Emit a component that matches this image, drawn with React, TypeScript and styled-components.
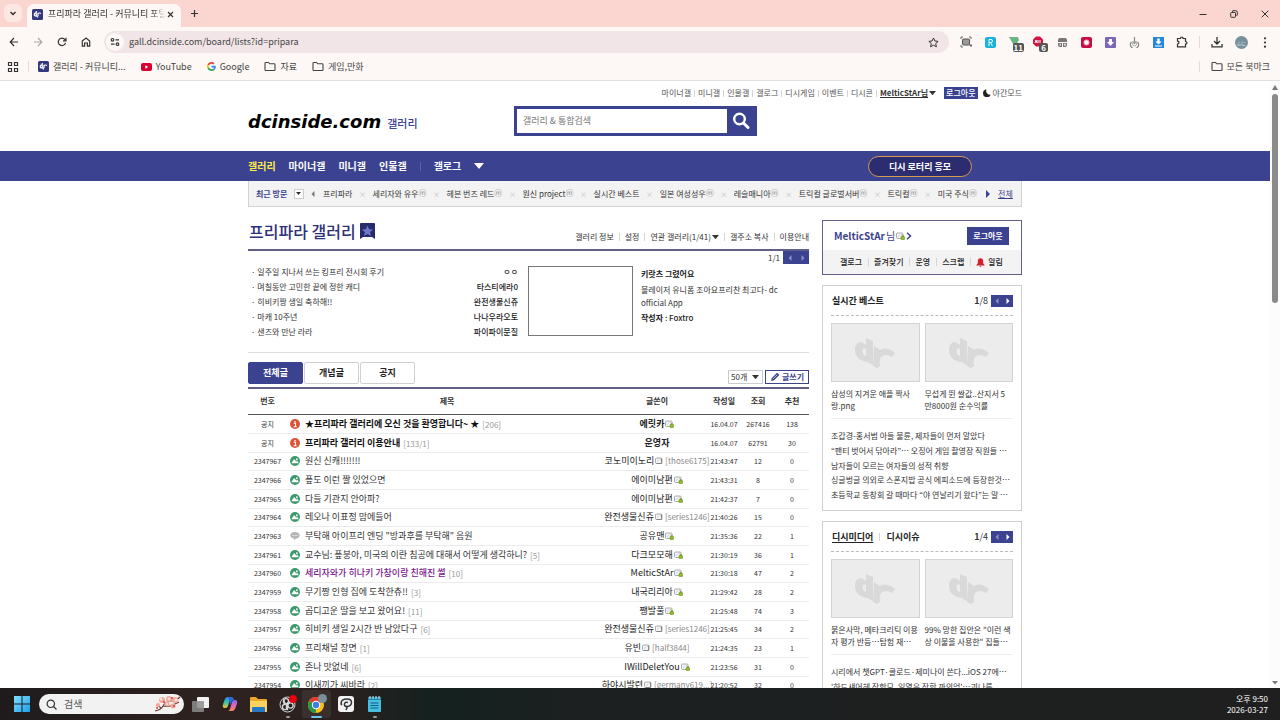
import React from "react";
import styled, { createGlobalStyle } from "styled-components";

const navy = "#3b4390";
const rule = "#615e88";
const sans = `"Noto Sans CJK KR", "Noto Sans", sans-serif`;

const Global = createGlobalStyle`
  *, *::before, *::after { box-sizing: border-box; }
  html, body, #root { height: 100%; }
  body { margin: 0; overflow: hidden; font-family: ${sans}; font-size: 8px; line-height: 12px; color: #333; background: #fff; }
  a { color: inherit; text-decoration: none; }
  ul, h1, h2, h3, p { margin: 0; padding: 0; list-style: none; font-size: inherit; font-weight: inherit; }
  button, input, select { font: inherit; color: inherit; margin: 0; padding: 0; border: 0; background: none; border-radius: 0; }
  button { cursor: pointer; }
  svg { display: block; flex: none; }
`;

/* ---------- browser window ---------- */

const Screen = styled.div`
  display: flex;
  flex-direction: column;
  height: 100vh;
`;

const TabStrip = styled.header`
  display: flex;
  align-items: flex-end;
  height: 27px;
  flex: none;
  padding-left: 4px;
  background: #fbd6d0;
`;

const TabSearch = styled.button`
  display: grid;
  place-items: center;
  width: 18px;
  height: 18px;
  margin: 0 5px 5px 0;
  border-radius: 6px;
  background: #fde7e3;
`;

const Tab = styled.div`
  display: flex;
  align-items: center;
  width: 154px;
  height: 23px;
  padding: 0 6px 3px 5px;
  border-radius: 7px 7px 0 0;
  background: #fdf8f6;
  font-size: 9px;
  color: #333;
`;

const TabTitle = styled.span`
  flex: 1;
  margin-left: 5px;
  overflow: hidden;
  white-space: nowrap;
  mask-image: linear-gradient(90deg, #000 88%, transparent);
`;

const NewTab = styled.button`
  display: grid;
  place-items: center;
  width: 26px;
  height: 27px;
`;

const WindowButtons = styled.div`
  display: flex;
  margin-left: auto;
`;

const WindowButton = styled.button`
  display: grid;
  place-items: center;
  width: 31px;
  height: 27px;
`;

const Toolbar = styled.div`
  display: flex;
  align-items: center;
  height: 30px;
  flex: none;
  padding: 0 3px 0 2px;
  background: #fdf8f6;
`;

const ToolButton = styled.button`
  position: relative;
  display: grid;
  place-items: center;
  width: 24px;
  height: 24px;
`;

const Address = styled.div`
  display: flex;
  align-items: center;
  flex: 1;
  height: 22px;
  margin: 0 5px 0 6px;
  padding: 0 10px 0 2px;
  border-radius: 11px;
  background: #f1e5e8;
`;

const SiteInfo = styled.button`
  display: grid;
  place-items: center;
  width: 18px;
  height: 18px;
  border-radius: 50%;
  background: #fdf8f6;
`;

const UrlInput = styled.input`
  flex: 1;
  margin-left: 5px;
  font-size: 9px;
  color: #444;
  outline: 0;
`;

const VLine = styled.span<{ $h?: number; $m?: number; $c?: string }>`
  flex: none;
  width: 1px;
  height: ${(p) => p.$h ?? 8}px;
  margin: 0 ${(p) => p.$m ?? 0}px;
  background: ${(p) => p.$c ?? "#d5d5d5"};
`;

const CountBadge = styled.span`
  position: absolute;
  right: 2px;
  bottom: 2px;
  min-width: 9px;
  padding: 0 1px;
  border-radius: 2px;
  background: #555;
  color: #fff;
  font-size: 8px;
  font-weight: 700;
  line-height: 9px;
  text-align: center;
`;

const Avatar = styled.span`
  display: grid;
  place-items: center;
  width: 13px;
  height: 13px;
  border-radius: 50%;
  background: #78909c;
  color: #dfe7ea;
  font-size: 5px;
  line-height: 13px;
`;

const Bookmarks = styled.nav`
  display: flex;
  align-items: center;
  height: 24px;
  flex: none;
  padding: 0 10px 4px 7px;
  border-bottom: 1px solid #e4dfde;
  background: #fdf8f6;
  font-size: 9px;
  color: #444;
`;

const Bookmark = styled.a`
  display: flex;
  align-items: center;
  gap: 4px;
  margin-right: 15px;
  white-space: nowrap;
`;

const AllBookmarks = styled(Bookmark)`
  margin: 0 0 0 11px;
`;

const Push = styled.span`
  flex: 1;
`;

/* ---------- page frame ---------- */

const Viewport = styled.div`
  display: flex;
  flex: 1;
  min-height: 0;
`;

const Page = styled.div`
  flex: 1;
  min-width: 0;
  overflow: hidden;
`;

const Wrap = styled.div`
  width: 100%;
  max-width: 774px;
  margin: 0 auto;
`;

const ScrollTrack = styled.div`
  display: flex;
  flex-direction: column;
  align-items: center;
  width: 10px;
  padding: 4px 0 3px;
  background: #fcfcfc;
`;

const ScrollThumb = styled.div`
  width: 6px;
  height: 32%;
  flex: 0 1 auto;
  margin: 4px 0 auto;
  border-radius: 3px;
  background: #8a8a8a;
  min-height: 20px;
  flex-basis: 209px;
`;

/* ---------- site header ---------- */

const TopLinks = styled.div`
  display: flex;
  align-items: center;
  justify-content: flex-end;
  gap: 3px;
  height: 24px;
  color: #555;
`;

const UserLink = styled.a`
  display: flex;
  align-items: center;
  gap: 1px;
  font-weight: 700;
  color: #333;
  u { text-underline-offset: 1px; }
`;

const LogoutSmall = styled.button`
  height: 12px;
  margin: 0 2px 0 5px;
  padding: 0 2px;
  background: ${navy};
  color: #fff;
  font-weight: 500;
  line-height: 12px;
`;

const Moon = styled.button`
  display: flex;
  align-items: center;
  gap: 2px;
`;

const Brand = styled.div`
  display: grid;
  grid-template-columns: 266px 243px;
  height: 46px;
`;

const BrandName = styled.h1`
  display: flex;
  align-items: baseline;
  gap: 6px;
  padding-top: 6px;
  line-height: 22px;
`;

const Wordmark = styled.a`
  font-family: "DejaVu Sans", sans-serif;
  font-size: 18px;
  font-style: italic;
  font-weight: 700;
  color: #000;
`;

const BrandSub = styled.a`
  font-size: 11px;
  font-weight: 500;
  color: ${navy};
`;

const Search = styled.form`
  display: flex;
  height: 30px;
  margin-top: 1px;
  border: 3px solid ${navy};
  background: #fff;
`;

const SearchInput = styled.input`
  flex: 1;
  min-width: 0;
  padding-left: 6px;
  font-size: 9px;
  outline: 0;
  &::placeholder { color: #777; opacity: 1; }
`;

const SearchButton = styled.button`
  display: grid;
  place-items: center;
  width: 27px;
  background: ${navy};
`;

const MainNav = styled.nav`
  background: ${navy};
  color: #fff;
`;

const NavRow = styled(Wrap)`
  display: flex;
  align-items: center;
  height: 30px;
  font-size: 10px;
  font-weight: 700;
`;

const NavLink = styled.a<{ $on?: boolean }>`
  margin-right: 13px;
  color: ${(p) => (p.$on ? "#ffed44" : "#fff")};
`;

const Promo = styled.a`
  width: 104px;
  height: 21px;
  margin: 0 50px 0 auto;
  border: 1px solid #d79a55;
  border-radius: 11px;
  background: #2b2d70;
  font-size: 9px;
  line-height: 19px;
  text-align: center;
`;

const Recent = styled(Wrap)`
  display: flex;
  align-items: center;
  justify-content: space-between;
  height: 26px;
  padding: 0 8px 0 7px;
  border: 1px solid #d3d3d3;
  border-top: 0;
  background: #f3f3f3;
  white-space: nowrap;
`;

const RecentTitle = styled.strong`
  color: ${navy};
`;

const TinyBox = styled.button`
  display: grid;
  place-items: center;
  width: 10px;
  height: 10px;
  border: 1px solid #ccc;
  background: #fff;
`;

const Visit = styled.a`
  display: flex;
  align-items: flex-start;
`;

const Minor = styled.span`
  font-size: 8px;
  line-height: 9px;
  color: #888;
`;

const Remove = styled.button`
  color: #bbb;
  font-size: 7px;
`;

const AllLink = styled.a`
  color: ${navy};
  text-decoration: underline;
  text-underline-offset: 1px;
`;

/* ---------- gallery column ---------- */

const Columns = styled(Wrap)`
  display: grid;
  grid-template-columns: minmax(0, 1fr) 200px;
  gap: 13px;
  align-items: start;
`;

const GalleryHead = styled.div`
  display: flex;
  align-items: flex-end;
  height: 44px;
  padding: 0 0 6px 1px;
  border-bottom: 2px solid ${rule};
`;

const GalleryTitle = styled.h2`
  display: flex;
  align-items: center;
  gap: 4px;
  font-size: 16px;
  font-weight: 500;
  line-height: 24px;
  color: #2d3178;
`;

const GalleryLinks = styled.div`
  display: flex;
  align-items: center;
  gap: 5px;
  margin-left: auto;
  color: #333;
`;

const WithArrow = styled.a`
  display: flex;
  align-items: center;
  gap: 1px;
`;

const Feature = styled.section`
  display: grid;
  grid-template-columns: 270px 105px minmax(0, 1fr);
  column-gap: 10px;
  height: 102px;
  border-bottom: 1px solid #ddd;
`;

const FeatureList = styled.ul`
  display: flex;
  flex-direction: column;
  justify-content: space-between;
  height: 72px;
  margin-top: 15px;
  padding-left: 3px;
`;

const FeatureItem = styled.li`
  display: flex;
  justify-content: space-between;
`;

const FeatureWriter = styled.span`
  font-weight: 500;
  color: #222;
`;

const FeatureImage = styled.a`
  height: 70px;
  margin-top: 15px;
  border: 1px solid #777;
  background: #fff;
`;

const FeatureText = styled.div`
  display: flex;
  flex-direction: column;
  margin-left: -2px;
`;

const Pager = styled.div`
  display: flex;
  align-items: center;
  justify-content: flex-end;
  gap: 3px;
  color: #333;
`;

const PagerButtons = styled.span<{ $tall?: boolean }>`
  display: flex;
  height: ${(p) => (p.$tall ? 13 : 12)}px;
  background: ${navy};
  button {
    display: grid;
    place-items: center;
    width: ${(p) => (p.$tall ? 13 : 11)}px;
  }
`;

const FeatureTitle = styled.strong`
  margin-top: 4px;
  line-height: 12px;
  color: #222;
`;

const FeatureDesc = styled.p`
  margin: 3px 0;
  line-height: 13px;
`;

const ListBar = styled.div`
  display: flex;
  align-items: flex-end;
  gap: 1px;
  height: 36px;
  padding-bottom: 3px;
  border-bottom: 2px solid ${rule};
`;

const ListTab = styled.button<{ $on?: boolean }>`
  width: 55px;
  height: 22px;
  border: 1px solid ${(p) => (p.$on ? navy : "#d0d0d0")};
  border-radius: 2px;
  background: ${(p) => (p.$on ? navy : "#fff")};
  color: ${(p) => (p.$on ? "#fff" : "#222")};
  font-size: 9px;
  font-weight: 700;
`;

const SelectBox = styled.label`
  display: flex;
  align-items: center;
  width: 35px;
  height: 14px;
  margin: 0 1px 0 auto;
  padding: 0 3px 0 2px;
  border: 1px solid #ccc;
  select { flex: 1; min-width: 0; appearance: none; outline: 0; line-height: 12px; }
`;

const WriteButton = styled.button`
  display: flex;
  align-items: center;
  justify-content: center;
  gap: 2px;
  width: 44px;
  height: 14px;
  border: 1px solid ${navy};
  color: ${navy};
  font-weight: 700;
`;

const Posts = styled.table`
  width: 100%;
  border-collapse: collapse;
  table-layout: fixed;
  th { height: 25px; padding: 0; border-bottom: 1px solid #555; font-weight: 700; }
  td { height: 19px; padding: 0; border-bottom: 1px solid #ececec; font-size: 7px; text-align: center; white-space: nowrap; }
  tbody tr:nth-child(3n) td { height: 18px; }
`;

const Col = styled.col<{ $w?: number }>`
  width: ${(p) => (p.$w ? `${p.$w}px` : "auto")};
`;

const Subject = styled.div`
  display: flex;
  align-items: center;
  gap: 5px;
  padding-left: 3px;
  font-size: 9px;
`;

const SubjectLink = styled.a<{ $kind?: string }>`
  font-weight: ${(p) => (p.$kind === "notice" ? 700 : p.$kind === "seen" ? 500 : 400)};
  color: ${(p) => (p.$kind === "seen" ? "#7a1589" : p.$kind === "notice" ? "#111" : "#333")};
`;

const Replies = styled.a`
  margin: 2px 0 0 -2px;
  font-size: 8px;
  color: #999;
`;

const Writer = styled.span<{ $bold?: boolean }>`
  display: flex;
  align-items: center;
  justify-content: center;
  gap: 1px;
  font-size: 9px;
  font-weight: ${(p) => (p.$bold ? 700 : 400)};
  color: #222;
  small { font-size: 8px; color: #888; }
`;

/* ---------- side column ---------- */

const Side = styled.aside`
  display: flex;
  flex-direction: column;
  gap: 10px;
  padding-top: 13px;
`;

const UserBox = styled.section`
  border: 1px solid ${rule};
`;

const UserTop = styled.div`
  display: flex;
  align-items: center;
  height: 29px;
  padding: 0 12px 0 11px;
  font-size: 10px;
  color: ${navy};
  a { display: flex; align-items: center; gap: 1px; }
`;

const Logout = styled.button`
  width: 42px;
  height: 18px;
  margin-left: auto;
  background: ${navy};
  color: #fff;
  font-size: 8px;
  font-weight: 700;
`;

const UserMenu = styled.div`
  display: flex;
  align-items: center;
  justify-content: space-between;
  height: 24px;
  padding: 0 18px 0 17px;
  background: #f3f3f3;
  font-weight: 500;
  color: #222;
  a { display: flex; align-items: center; gap: 3px; }
`;

const Card = styled.section`
  padding: 0 8px 8px;
  border: 1px solid #d0d0d0;
`;

const CardHead = styled.div`
  display: flex;
  align-items: center;
  height: 30px;
  padding-left: 1px;
  border-bottom: 1px dashed #bbb;
  font-size: 9px;
  font-weight: 700;
  color: #222;
`;

const CardTab = styled.button<{ $on?: boolean }>`
  font-weight: 700;
  text-decoration: ${(p) => (p.$on ? "underline" : "none")};
  text-underline-offset: 2px;
`;

const CardPager = styled(Pager)`
  margin-left: auto;
  font-weight: 400;
`;

const Thumbs = styled.div`
  display: grid;
  grid-template-columns: 1fr 1fr;
  gap: 5px;
  padding: 7px 0 6px;
  border-bottom: 1px solid #eee;
`;

const Thumb = styled.a`
  display: flex;
  flex-direction: column;
  gap: 6px;
  white-space: nowrap;
`;

const ThumbBox = styled.span`
  display: grid;
  place-items: center;
  height: 59px;
  border: 1px solid #d3d3d3;
  background: #ececec;
`;

const Headlines = styled.ul`
  display: flex;
  flex-direction: column;
  justify-content: space-between;
  height: 73px;
  margin-top: 10px;
  li { overflow: hidden; white-space: nowrap; text-overflow: ellipsis; line-height: 14px; }
`;

/* ---------- taskbar ---------- */

const Taskbar = styled.footer`
  display: flex;
  align-items: center;
  height: 32px;
  flex: none;
  padding: 0 12px 0 10px;
  background: linear-gradient(90deg, #1f1b1d 0, #2e2220 16%, #2b211f 26%, #14211f 34%, #1c2020 45%, #1f1f1f 100%);
`;

const TaskSearch = styled.label`
  display: flex;
  align-items: center;
  gap: 7px;
  width: 145px;
  height: 20px;
  margin: 0 2px 0 5px;
  padding: 0 3px 0 7px;
  border-radius: 10px;
  background: #f3f2f2;
  input { flex: 1; min-width: 0; font-size: 10px; outline: 0; }
  input::placeholder { color: #555; opacity: 1; }
`;

const TaskButton = styled.button<{ $wide?: boolean; $open?: boolean; $active?: boolean }>`
  position: relative;
  display: grid;
  place-items: center;
  width: ${(p) => (p.$wide ? 24 : 29)}px;
  height: 28px;
  border-radius: 3px;
  background: ${(p) => (p.$active ? "rgba(255,255,255,0.07)" : "none")};
  &::after {
    content: "";
    position: absolute;
    bottom: 0;
    width: ${(p) => (p.$active ? 11 : 4)}px;
    height: 2px;
    border-radius: 1px;
    background: ${(p) => (p.$active ? "#6cc4ef" : p.$open ? "#9a9a9a" : "transparent")};
  }
`;

const Clock = styled.div`
  margin-left: auto;
  color: #fff;
  line-height: 11px;
  text-align: right;
`;

/* ---------- drawings ---------- */

const Down = ({ w = 6, c = "#333" }: { w?: number; c?: string }) => (
  <svg width={w} height={w * 0.6} viewBox="0 0 10 6"><path d="M0 0h10L5 6z" fill={c} /></svg>
);
const Side3 = ({ dir, c, s = 6 }: { dir: "l" | "r"; c: string; s?: number }) => (
  <svg width={s} height={s} viewBox="0 0 6 6"><path d={dir === "l" ? "M4.5 0v6L1.5 3z" : "M1.5 0v6l3-3z"} fill={c} /></svg>
);

const DcMark = () => (
  <svg width="11" height="11" viewBox="0 0 22 22">
    <rect width="22" height="22" rx="3" fill="#33387f" />
    <path d="M8.5 4v9.5q-4 1-4-2.500T8.500 8.500M8.500 13.500l3.500 3M12 14V7.500M12 10q2-3.500 6-1" fill="none" stroke="#fff" strokeWidth="2.400" />
  </svg>
);

const Placeholder = () => (
  <svg width="42" height="32" viewBox="0 0 42 32" fill="#d9d9d9">
    <path fillRule="evenodd" d="M12 1l7 3v24L13.500 25Q1 23 1 13 1 5 7.500 5L12 8zM12 12Q8.500 10 8.500 14t3.500 5z" />
    <path d="M20 9l6 4q6-4 15 3l-3 4q-7-4-11 0-2 3-1 9l-3 2-4-2z" />
  </svg>
);

const Folder = () => (
  <svg width="12" height="11" viewBox="0 0 12 11"><path d="M1 2.200q0-.7.700-.7h2.800l1.200 1.300h4.600q.7 0 .7.700v5.300q0 .7-.7.700H1.700q-.7 0-.7-.7z" fill="none" stroke="#444" strokeWidth="1.100" /></svg>
);

const NickIcon = ({ locked = true }: { locked?: boolean }) => (
  <svg width="9" height="8" viewBox="0 0 18 16">
    <rect x="1" y="2" width="13" height="11" rx="2" fill="#f4f4f4" stroke="#999" strokeWidth="1.600" />
    <path d="M4 10l4-5M10 4l2 2" stroke="#aaa" />
    {locked ? <g><rect x="10" y="9" width="7" height="6" rx="1" fill="#8fc31f" stroke="#5a7d12" /><path d="M12 9V7h3v2" fill="none" stroke="#5a7d12" /></g> : <path d="M13 3v10H3" fill="none" stroke="#777" strokeWidth="1.600" />}
  </svg>
);

const RowIcon = ({ kind }: { kind?: string }) => {
  if (kind === "notice")
    return (
      <svg width="10" height="10" viewBox="0 0 20 20"><circle cx="10" cy="10" r="10" fill="#dd5536" /><circle cx="10" cy="5.500" r="1.700" fill="#fff" /><path d="M7.500 8.500H11v6.500M7.500 15.200h5.500" stroke="#fff" strokeWidth="2.200" fill="none" /></svg>
    );
  if (kind === "talk")
    return (
      <svg width="10" height="10" viewBox="0 0 20 20"><path d="M10 2c5.500 0 9.500 2.800 9.500 6.700S16 15 11.500 15.400L8 18.500V15.200C3.500 14.700.5 12 .5 8.700.5 4.800 4.500 2 10 2z" fill="#b5b5b5" /><path d="M5 9h2m2 0h2m2 0h2" stroke="#fff" strokeWidth="1.800" /></svg>
    );
  return (
    <svg width="10" height="10" viewBox="0 0 20 20"><circle cx="10" cy="10" r="10" fill="#3a9a6c" /><path d="M3.500 14.500V13l4.700-7 4.500 5 1.800-1.500 2.500 3v2z" fill="#fff" /><circle cx="13.800" cy="6.500" r="1.800" fill="#fff" /></svg>
  );
};

const line = { fill: "none", stroke: "#333", strokeWidth: 1.2 } as const;

/* ---------- data ---------- */

type Post = [no: string, kind: string, title: string, replies: string, writer: string, id: string, date: string, views: string, likes: string];

const posts: Post[] = [
  ["공지", "notice", "★프리파라 갤러리에 오신 것을 환영합니다~ ★", "206", "에릿카", "lock", "16.04.07", "267416", "138"],
  ["공지", "notice", "프리파라 갤러리 이용안내", "133/1", "운영자", "", "16.04.07", "62791", "30"],
  ["2347967", "", "원신 신캐!!!!!!!", "", "코노미이노리", "those6175", "21:43:47", "12", "0"],
  ["2347966", "", "픞도 이런 짤 있었으면", "", "에이미남편", "lock", "21:43:31", "8", "0"],
  ["2347965", "", "다들 기관지 안아파?", "", "에이미남편", "lock", "21:42:37", "7", "0"],
  ["2347964", "", "레오나 이표정 맘에들어", "", "완전생물신쥬", "series1246", "21:40:26", "15", "0"],
  ["2347963", "talk", "부탁해 아이프리 엔딩 \"방과후를 부탁해\" 음원", "", "공유맨", "lock", "21:35:36", "22", "1"],
  ["2347961", "", "교수님: 픞붕아, 미국의 이란 침공에 대해서 어떻게 생각하니?", "5", "다크모모해", "lock", "21:30:19", "36", "1"],
  ["2347960", "seen", "세리자와가 히나키 가창이랑 친해진 썰", "10", "MelticStAr", "lock", "21:30:18", "47", "2"],
  ["2347959", "", "무기짱 인형 집에 도착한츄!!", "3", "내국리리아", "lock", "21:29:42", "28", "2"],
  ["2347958", "", "곱디고운 딸을 보고 왔어요!", "11", "쨍발풀", "lock", "21:25:48", "74", "3"],
  ["2347957", "", "히비키 생일 2시간 반 남았다구", "6", "완전생물신쥬", "series1246", "21:25:45", "34", "2"],
  ["2347956", "", "프리채널 장면", "1", "유빈", "half3844", "21:24:35", "23", "1"],
  ["2347955", "", "존나 맛없네", "6", "IWillDeletYou", "lock", "21:23:56", "31", "0"],
  ["2347954", "", "이새끼가 씨바라", "2", "하야시발련", "germany619...", "21:20:52", "32", "0"],
];

const features = [
  ["일주일 지나서 쓰는 킹프리 전시회 후기", "ㅇㅇ"],
  ["며칠동안 고민한 끝에 정한 캐디", "타스티에라0"],
  ["히비키짱 생일 축하해!!", "완전생물신쥬"],
  ["마캐 10주년", "나나우라오토"],
  ["샌즈와 만난 라라", "파이파이문질"],
];

const visits: [string, boolean][] = [
  ["프리파라", false], ["세리자와 유우", true], ["헤븐 번즈 레드", true], ["원신 project", true], ["실시간 베스트", false],
  ["일본 여성성우", true], ["레슬매니아", true], ["트릭컬 글로벌서버", true], ["트릭컬", true], ["미국 주식", true],
];

const bestThumbs = [["삼성의 지겨운 애플 짝사", "랑.png"], ["무섭게 뛴 쌀값..산지서 5", "만8000원 순수익률"]];
const mediaThumbs = [["붉은사막, 메타크리틱 이용", "자 평가 반등…탐험 재…"], ["99% 망한 집안은 \"이런 색", "상 이불을 사용한\" 집들…"]];

const bestLines = [
  "조갑경-홍서범 아들 불륜, 제자들이 먼저 알았다",
  "“팬티 벗어서 닦아라”… 오징어 게임 촬영장 직원들 …",
  "남자들이 모르는 여자들의 성적 취향",
  "싱글벙글 의외로 스폰지밥 공식 에피소드에 등장한것…",
  "초등학교 동창회 갈 때마다 “야 연날리기 왔다”는 말 …",
];
const mediaLines = [
  "시리에서 챗GPT·클로드·제미나이 쓴다...iOS 27에서…",
  "'하드섀어헤 장항모, 일열우 장학 까의엄'…괴나름",
  "프로야구 개막전 전 구장 매진 행진",
  "신작 애니메이션 4월 방영 일정 공개",
  "봄나들이 가기 좋은 전국 벚꽃 명소",
];

const ThumbPair = ({ items }: { items: string[][] }) => (
  <Thumbs>
    {items.map((t) => (
      <Thumb href="#" key={t[0]}>
        <ThumbBox><Placeholder /></ThumbBox>
        <span>{t[0]}<br />{t[1]}</span>
      </Thumb>
    ))}
  </Thumbs>
);

const SidePager = ({ total }: { total: number }) => (
  <CardPager>
    <span><b>1</b>/{total}</span>
    <PagerButtons>
      <button aria-label="이전"><Side3 dir="l" c="#8b90c8" /></button>
      <button aria-label="다음"><Side3 dir="r" c="#fff" /></button>
    </PagerButtons>
  </CardPager>
);

/* ---------- sections ---------- */

const BrowserTop = () => (
  <>
    <TabStrip>
      <TabSearch aria-label="탭 검색"><svg width="8" height="8" viewBox="0 0 8 8"><path d="M1.500 3L4 5.500 6.500 3" {...line} strokeWidth={1.5} /></svg></TabSearch>
      <Tab>
        <DcMark />
        <TabTitle>프리파라 갤러리 - 커뮤니티 포털</TabTitle>
        <button aria-label="탭 닫기"><svg width="9" height="9" viewBox="0 0 9 9"><path d="M2 2l5 5M7 2L2 7" {...line} /></svg></button>
      </Tab>
      <NewTab aria-label="새 탭"><svg width="9" height="9" viewBox="0 0 9 9"><path d="M4.500 1v7M1 4.500h7" {...line} /></svg></NewTab>
      <WindowButtons>
        <WindowButton aria-label="최소화"><svg width="8" height="8" viewBox="0 0 8 8"><path d="M.5 4.500h7" {...line} strokeWidth={1} /></svg></WindowButton>
        <WindowButton aria-label="창 복원"><svg width="8" height="8" viewBox="0 0 8 8"><path d="M2.500 2V1.200Q2.500.7 3 .7h2.800Q7.300.7 7.300 2.200V5q0 .5-.8.500M1.400 2.500h3.400q.7 0 .7.700v3.400q0 .7-.7.700H1.400q-.7 0-.7-.7V3.200q0-.7.7-.7z" {...line} strokeWidth={1} /></svg></WindowButton>
        <WindowButton aria-label="닫기"><svg width="8" height="8" viewBox="0 0 8 8"><path d="M.7.7l6.600 6.600M7.300.7L.7 7.300" {...line} strokeWidth={1} /></svg></WindowButton>
      </WindowButtons>
    </TabStrip>
    <Toolbar>
      <ToolButton aria-label="뒤로"><svg width="10" height="10" viewBox="0 0 10 10"><path d="M9 5H1.500M5 1L1.200 5 5 9" {...line} /></svg></ToolButton>
      <ToolButton aria-label="앞으로"><svg width="10" height="10" viewBox="0 0 10 10"><path d="M1 5h7.500M5 1l3.800 4L5 9" {...line} stroke="#aaa" /></svg></ToolButton>
      <ToolButton aria-label="새로고침"><svg width="10" height="10" viewBox="0 0 10 10"><path d="M8.500 5.800A3.700 3.700 0 1 1 7.800 2.500L9 3.800M9 .8v3H6" {...line} /></svg></ToolButton>
      <ToolButton aria-label="홈"><svg width="10" height="10" viewBox="0 0 10 10"><path d="M1.300 4L5 1l3.700 3v5.200H6.400V6H3.600v3.200H1.300z" {...line} /></svg></ToolButton>
      <Address>
        <SiteInfo aria-label="사이트 정보"><svg width="10" height="10" viewBox="0 0 10 10"><circle cx="2.500" cy="2.800" r="1.300" {...line} /><path d="M5.500 2.800H9M1 7.200h3.500" {...line} /><circle cx="7.500" cy="7.200" r="1.300" {...line} /></svg></SiteInfo>
        <UrlInput aria-label="주소" defaultValue="gall.dcinside.com/board/lists?id=pripara" />
        <button aria-label="북마크 추가"><svg width="11" height="11" viewBox="0 0 11 11"><path d="M5.500 1l1.400 3 3.200.4-2.400 2.200.7 3.200-2.900-1.600-2.900 1.600.7-3.200L.9 4.400 4.100 4z" {...line} strokeWidth={1} /></svg></button>
      </Address>
      <ToolButton aria-label="캡처"><svg width="12" height="12" viewBox="0 0 12 12"><rect x="2.500" y="3" width="7" height="6" rx="1" fill="#999" stroke="#555" /><path d="M1 3V1h2M9 1h2v2M1 9v2h2M11 8v3M9.500 9.500h2.500" {...line} stroke="#666" strokeWidth={1} /></svg></ToolButton>
      <ToolButton aria-label="R 확장"><svg width="11" height="11" viewBox="0 0 11 11"><rect width="11" height="11" rx="2" fill="#1ab3d8" /><path d="M4 9V2.500h2Q7.500 2.500 7.500 4T6 5.500H4M5.500 5.500L7.500 9" fill="none" stroke="#e8fbff" /></svg></ToolButton>
      <ToolButton aria-label="번역"><svg width="12" height="12" viewBox="0 0 12 12"><path d="M1 1h9l1 3-3 5-3-1z" fill="#6cb583" /></svg><CountBadge>11</CountBadge></ToolButton>
      <ToolButton aria-label="광고 차단"><svg width="12" height="12" viewBox="0 0 12 12"><path d="M4 .5h4L11 3.500v4L8 10.500H4L1 7.500v-4z" fill="#d3123f" /><path d="M3 7l1-3 1 3M6 4v3M8 4v3" stroke="#fff" fill="none" /></svg><CountBadge>6</CountBadge></ToolButton>
      <ToolButton aria-label="컨테이너"><svg width="11" height="11" viewBox="0 0 11 11"><path d="M1 5V3q0-2 2-2h5q2 0 2 2v2zM1 6h4v4H3q-2 0-2-2zM6 6h4v2q0 2-2 2H6z" fill="#777" /><path d="M2.200 6.800h1.800v2H3M7 6.800h1.800v2H7z" fill="#ddd" /></svg></ToolButton>
      <ToolButton aria-label="녹화"><svg width="11" height="11" viewBox="0 0 11 11"><rect width="11" height="11" rx="2" fill="#c90d43" /><circle cx="5.500" cy="5.500" r="2.600" fill="#fff" stroke="#f0a4b8" /></svg></ToolButton>
      <ToolButton aria-label="내려받기 도구"><svg width="11" height="11" viewBox="0 0 11 11"><rect width="11" height="11" rx="1" fill="#7a68b8" /><path d="M4 2h3v3h2L5.500 9 2 5h2z" fill="#fff" /></svg></ToolButton>
      <ToolButton aria-label="저장"><svg width="11" height="11" viewBox="0 0 11 11"><path d="M2.500 5A4 4 0 1 0 8.500 5M5.500 0v6M3.500 4.500l2 2 2-2" {...line} stroke="#888" /><circle cx="5.500" cy="7" r="2" fill="none" stroke="#aaa" /></svg></ToolButton>
      <ToolButton aria-label="동영상 저장"><svg width="11" height="11" viewBox="0 0 11 11"><rect width="11" height="11" fill="#2388d8" /><path d="M4.300 1.500h2.400v3h2L5.500 7.500l-3.200-3h2zM2 8.500h7v1H2z" fill="#fff" /></svg></ToolButton>
      <ToolButton aria-label="확장 프로그램"><svg width="12" height="12" viewBox="0 0 12 12"><path d="M1.500 2.500h3Q4.500 1 5.800 1T7 2.500h2.500v3Q11 5.500 11 6.800T9.500 8v2.800h-8V8Q3 8 3 6.600T1.500 5.200z" {...line} /></svg></ToolButton>
      <VLine $h={12} $m={5} $c="#ead9d8" />
      <ToolButton aria-label="다운로드"><svg width="12" height="12" viewBox="0 0 12 12"><path d="M6 1v6.500M3 5l3 3 3-3M1 8v2.800h10V8" {...line} strokeWidth={1.3} /></svg></ToolButton>
      <ToolButton aria-label="프로필"><Avatar>ふに</Avatar></ToolButton>
      <ToolButton aria-label="메뉴"><svg width="4" height="11" viewBox="0 0 4 11" fill="#333"><circle cx="2" cy="1.300" r="1.100" /><circle cx="2" cy="5.500" r="1.100" /><circle cx="2" cy="9.700" r="1.100" /></svg></ToolButton>
    </Toolbar>
    <Bookmarks>
      <button aria-label="앱"><svg width="12" height="12" viewBox="0 0 12 12"><path d="M1.500 1.500h3v3h-3zM7.500 1.500h3v3h-3zM1.500 7.500h3v3h-3zM7.500 7.500h3v3h-3z" {...line} /></svg></button>
      <VLine $h={11} $m={9} $c="#ead9d8" />
      <Bookmark href="#"><DcMark />갤러리 - 커뮤니티...</Bookmark>
      <Bookmark href="#"><svg width="11" height="8" viewBox="0 0 11 8"><rect width="11" height="8" rx="2" fill="#d8002f" /><path d="M4.300 2.200v3.600L7.300 4z" fill="#fff" /></svg>YouTube</Bookmark>
      <Bookmark href="#"><svg width="9" height="9" viewBox="0 0 48 48"><path fill="#ea4335" d="M24 9.500c3.500 0 6.700 1.200 9.200 3.600l6.900-6.900C35.900 2.400 30.500 0 24 0 14.600 0 6.500 5.400 2.600 13.200l8 6.200C12.400 13.700 17.700 9.500 24 9.500z" /><path fill="#4285f4" d="M47 24.500c0-1.600-.2-3.100-.4-4.500H24v9h12.900c-.6 3-2.200 5.500-4.700 7.200l7.700 6C44.400 38 47 31.800 47 24.500z" /><path fill="#fbbc05" d="M10.500 28.600a14.500 14.500 0 0 1 0-9.200l-8-6.200a24 24 0 0 0 0 21.600z" /><path fill="#34a853" d="M24 48c6.500 0 11.900-2.100 15.900-5.800l-7.700-6c-2.200 1.500-4.900 2.300-8.200 2.300-6.300 0-11.600-4.200-13.500-9.900l-8 6.200C6.500 42.600 14.600 48 24 48z" /></svg>Google</Bookmark>
      <Bookmark href="#"><Folder />자료</Bookmark>
      <Bookmark href="#"><Folder />게임,만화</Bookmark>
      <Push />
      <VLine $h={11} $c="#ead9d8" />
      <AllBookmarks href="#"><Folder />모든 북마크</AllBookmarks>
    </Bookmarks>
  </>
);

const SiteHeader = () => (
  <>
    <Wrap as="header">
      <TopLinks>
        {["마이너갤", "미니갤", "인물갤", "갤로그", "디시게임", "이벤트", "디시콘"].map((t) => (
          <React.Fragment key={t}><a href="#">{t}</a><VLine $h={7} /></React.Fragment>
        ))}
        <UserLink href="#"><u>MelticStAr님</u><Down w={7} /></UserLink>
        <LogoutSmall>로그아웃</LogoutSmall>
        <Moon><svg width="8" height="8" viewBox="0 0 8 8"><path d="M3.500.3A4 4 0 1 0 7.700 5.800 4 4 0 0 1 3.500.3z" fill="#222" /></svg>야간모드</Moon>
      </TopLinks>
      <Brand>
        <BrandName><Wordmark href="#">dcinside.com</Wordmark><BrandSub href="#">갤러리</BrandSub></BrandName>
        <Search onSubmit={(e) => e.preventDefault()}>
          <SearchInput aria-label="통합검색" placeholder="갤러리 & 통합검색" />
          <SearchButton aria-label="검색"><svg width="18" height="18" viewBox="0 0 18 18"><circle cx="7.500" cy="7" r="5.300" fill="none" stroke="#fff" strokeWidth="2.400" /><path d="M11.500 11l4.500 4.500" stroke="#fff" strokeWidth="3" strokeLinecap="round" /></svg></SearchButton>
        </Search>
      </Brand>
    </Wrap>
    <MainNav>
      <NavRow>
        <NavLink href="#" $on>갤러리</NavLink>
        <NavLink href="#">마이너갤</NavLink>
        <NavLink href="#">미니갤</NavLink>
        <NavLink href="#">인물갤</NavLink>
        <VLine $h={9} $c="#5d64a8" />
        <NavLink as="span" />
        <NavLink href="#">갤로그</NavLink>
        <button aria-label="더보기"><Down w={10} c="#fff" /></button>
        <Promo href="#">디시 로터리 응모</Promo>
      </NavRow>
    </MainNav>
    <Recent>
      <RecentTitle>최근 방문</RecentTitle>
      <TinyBox aria-label="펼치기"><Down w={5} /></TinyBox>
      <button aria-label="이전"><Side3 dir="l" c="#777" /></button>
      {visits.map(([name, minor], i) => (
        <React.Fragment key={name}>
          <Visit href="#">{name}{minor && <Minor>ⓜ</Minor>}</Visit>
          {i < visits.length - 1 && <Remove aria-label={`${name} 삭제`}>×</Remove>}
        </React.Fragment>
      ))}
      <button aria-label="다음"><Side3 dir="r" c={navy} s={8} /></button>
      <AllLink href="#">전체</AllLink>
    </Recent>
  </>
);

const PostRow = ({ post }: { post: Post }) => {
  const [no, kind, title, replies, writer, id, date, views, likes] = post;
  return (
    <tr>
      <td>{no}</td>
      <td>
        <Subject>
          <RowIcon kind={kind} />
          <SubjectLink href="#" $kind={kind}>{title}</SubjectLink>
          {replies && <Replies href="#">[{replies}]</Replies>}
        </Subject>
      </td>
      <td>
        <Writer $bold={kind === "notice"}>
          {writer}
          {id && <NickIcon locked={id === "lock"} />}
          {id && id !== "lock" && <small>[{id}]</small>}
        </Writer>
      </td>
      <td>{date}</td>
      <td>{views}</td>
      <td>{likes}</td>
    </tr>
  );
};

const Gallery = () => (
  <main>
    <GalleryHead>
      <GalleryTitle>
        프리파라 갤러리
        <svg width="15" height="16" viewBox="0 0 15 16"><path d="M0 1q0-1 1-1h13q1 0 1 1v15l-3-2H3l-3 2z" fill="#262b6e" /><path d="M7.500 2.500l1.600 3.700 4 .3-3 2.600.9 3.900-3.500-2.100L4 13l.9-3.900-3-2.600 4-.3z" fill="#6e78c8" /></svg>
      </GalleryTitle>
      <GalleryLinks>
        <a href="#">갤러리 정보</a><VLine />
        <a href="#">설정</a><VLine />
        <WithArrow href="#">연관 갤러리(1/41)<Down w={7} /></WithArrow><VLine />
        <a href="#">갤주소 복사</a><VLine />
        <a href="#">이용안내</a>
      </GalleryLinks>
    </GalleryHead>
    <Feature>
      <FeatureList>
        {features.map(([t, w]) => (
          <FeatureItem key={t}><a href="#">· {t}</a><FeatureWriter>{w}</FeatureWriter></FeatureItem>
        ))}
      </FeatureList>
      <FeatureImage href="#" aria-label="키랏츠 그렸어요" />
      <FeatureText>
        <Pager>
          1/1
          <PagerButtons $tall>
            <button aria-label="이전"><Side3 dir="l" c="#8b90c8" /></button>
            <button aria-label="다음"><Side3 dir="r" c="#8b90c8" /></button>
          </PagerButtons>
        </Pager>
        <FeatureTitle>키랏츠 그렸어요</FeatureTitle>
        <FeatureDesc>블레이저 유니폼 조아요프리찬 최고다- dc<br />official App</FeatureDesc>
        <FeatureWriter><b>작성자</b> : Foxtro</FeatureWriter>
      </FeatureText>
    </Feature>
    <ListBar>
      <ListTab $on>전체글</ListTab>
      <ListTab>개념글</ListTab>
      <ListTab>공지</ListTab>
      <SelectBox>
        <select aria-label="목록 개수"><option>50개</option><option>100개</option></select>
        <Down w={7} />
      </SelectBox>
      <WriteButton>
        <svg width="10" height="10" viewBox="0 0 10 10"><path d="M1 9l.8-3L6.500 1.200q.6-.6 1.200 0l1.100 1.100q.6.600 0 1.200L4 8.200z" fill={navy} /><path d="M3 6.800l4-4" stroke="#fff" strokeWidth=".7" /></svg>
        글쓰기
      </WriteButton>
    </ListBar>
    <Posts>
      <colgroup><Col $w={39} /><Col /><Col $w={100} /><Col $w={34} /><Col $w={34} /><Col $w={34} /></colgroup>
      <thead><tr><th>번호</th><th>제목</th><th>글쓴이</th><th>작성일</th><th>조회</th><th>추천</th></tr></thead>
      <tbody>{posts.map((p, i) => <PostRow key={i} post={p} />)}</tbody>
    </Posts>
  </main>
);

const SideColumn = () => (
  <Side>
    <UserBox>
      <UserTop>
        <a href="#"><b>MelticStAr</b>님<NickIcon /><svg width="6" height="8" viewBox="0 0 6 8"><path d="M1 .8L4.500 4 1 7.200" fill="none" stroke={navy} strokeWidth="1.500" /></svg></a>
        <Logout>로그아웃</Logout>
      </UserTop>
      <UserMenu>
        <a href="#">갤로그</a><VLine />
        <a href="#">즐겨찾기</a><VLine />
        <a href="#">운영</a><VLine />
        <a href="#">스크랩</a><VLine />
        <a href="#"><svg width="9" height="9" viewBox="0 0 9 9"><path d="M4.500.3q2.700.2 2.700 3v2L8.800 7.500H.2L1.800 5.300v-2q0-2.800 2.700-3zM3.300 8h2.400L4.500 9z" fill="#d51f2c" /></svg>알림</a>
      </UserMenu>
    </UserBox>
    <Card>
      <CardHead><h3>실시간 베스트</h3><SidePager total={8} /></CardHead>
      <ThumbPair items={bestThumbs} />
      <Headlines>{bestLines.map((t) => <li key={t}><a href="#">{t}</a></li>)}</Headlines>
    </Card>
    <Card>
      <CardHead>
        <CardTab $on>디시미디어</CardTab><VLine $m={6} /><CardTab>디시이슈</CardTab>
        <SidePager total={4} />
      </CardHead>
      <ThumbPair items={mediaThumbs} />
      <Headlines>{mediaLines.map((t) => <li key={t}><a href="#">{t}</a></li>)}</Headlines>
    </Card>
  </Side>
);

const TaskbarRow = () => (
  <Taskbar>
    <TaskButton $wide aria-label="시작"><svg width="16" height="16" viewBox="0 0 16 16"><defs><linearGradient id="win" x2="1" y2="1"><stop stopColor="#7fe0ff" /><stop offset="1" stopColor="#1f9fe8" /></linearGradient></defs><path d="M0 0h7.500v7.500H0zM8.500 0H16v7.500H8.500zM0 8.500h7.500V16H0zM8.500 8.500H16V16H8.500z" fill="url(#win)" /></svg></TaskButton>
    <TaskSearch>
      <svg width="11" height="11" viewBox="0 0 11 11"><circle cx="4.800" cy="4.800" r="3.700" {...line} /><path d="M7.500 7.500l3 3" {...line} /></svg>
      <input aria-label="작업 표시줄 검색" placeholder="검색" />
      <svg width="28" height="18" viewBox="0 0 28 18">
        <path d="M2 16q6-1 8-5t8-5 9-4M10 11q6 1 10-1t6-3M8 13Q5 10 3 10" fill="none" stroke="#6b3a35" strokeWidth="1.100" />
        <g fill="#f2a79b"><circle cx="9" cy="5" r="3" /><circle cx="16" cy="4" r="3" /><circle cx="22" cy="5" r="3" /><circle cx="14" cy="9" r="2.500" /><circle cx="20" cy="11" r="2.500" /><circle cx="5" cy="10" r="2" /></g>
        <g fill="#fbe3dc"><circle cx="8" cy="4" r="1.400" /><circle cx="16" cy="4" r="1.400" /><circle cx="23" cy="5" r="1.400" /><circle cx="14" cy="9" r="1" /></g>
        <g fill="#c9453c"><circle cx="11" cy="7" r="1" /><circle cx="19" cy="3" r="1" /><circle cx="21" cy="11" r="1" /><circle cx="4" cy="13" r="1" /></g>
      </svg>
    </TaskSearch>
    <TaskButton aria-label="작업 보기"><svg width="17" height="15" viewBox="0 0 17 15"><rect x="5" y="0" width="12" height="11" rx="1" fill="#f2f2f2" /><rect x="0" y="4" width="12" height="11" rx="1" fill="#8d8d8d" fillOpacity=".85" /></svg></TaskButton>
    <TaskButton aria-label="코파일럿"><svg width="16" height="16" viewBox="0 0 16 16"><defs><linearGradient id="cpa" x2="0" y2="1"><stop stopColor="#2b8cf0" /><stop offset=".5" stopColor="#35c5a0" /><stop offset="1" stopColor="#f6c33c" /></linearGradient><linearGradient id="cpb" x2="0" y2="1"><stop stopColor="#7a6cf0" /><stop offset=".5" stopColor="#e063c0" /><stop offset="1" stopColor="#f58a4b" /></linearGradient></defs><path d="M5.500 1H10Q8.500 1 8 3L6 10q-.6 2-2.500 2H3Q0 12 1 8.500L2.500 4Q3.500 1 5.500 1z" fill="url(#cpa)" /><path d="M10.500 15H6q1.500 0 2-2l2-7q.6-2 2.500-2h.5q3 0 2 3.500L13.500 12q-1 3-3 3z" fill="url(#cpb)" /><path d="M6 1h4q1.500 0 2 3-2 0-2.500 2L8.500 9z" fill="#3167d8" /></svg></TaskButton>
    <TaskButton aria-label="파일 탐색기"><svg width="17" height="15" viewBox="0 0 17 15"><path d="M0 1q0-1 1-1h5l2 2h8q1 0 1 1v11q0 1-1 1H1q-1 0-1-1z" fill="#e9a92c" /><path d="M0 4h17v10q0 1-1 1H1q-1 0-1-1z" fill="#fcd35c" /><path d="M2 15v-4q0-1 1-1h11q1 0 1 1v4z" fill="#2478c7" /></svg></TaskButton>
    <TaskButton $open aria-label="OBS"><svg width="18" height="18" viewBox="0 0 18 18"><circle cx="8.500" cy="9.500" r="7.500" fill="#222" stroke="#d8d8d8" /><g fill="none" stroke="#d8d8d8" strokeWidth="1.400"><path d="M5 5q0 4 3.500 4.500M13 7q-4-1-5 2.500M9 15q-3-2.500-.5-5.500" /><circle cx="7" cy="6.200" r="2.600" /><circle cx="11.500" cy="10.500" r="2.600" /><circle cx="6" cy="12" r="2.600" /></g><circle cx="14" cy="4" r="4" fill="#e60012" /></svg></TaskButton>
    <TaskButton $active aria-label="크롬"><svg width="20" height="20" viewBox="0 0 20 20"><circle cx="9" cy="11" r="8" fill="#fbc116" /><path d="M9 11L2.100 7A8 8 0 0 1 15.900 7z" fill="#e33b2e" /><path d="M9 11l0 8A8 8 0 0 1 2.100 7z" fill="#229a48" /><circle cx="9" cy="11" r="4.200" fill="#fff" /><circle cx="9" cy="11" r="3.200" fill="#3b7ded" /><circle cx="15.500" cy="4.500" r="4.500" fill="#78909c" /></svg></TaskButton>
    <TaskButton aria-label="클립 스튜디오"><svg width="16" height="16" viewBox="0 0 16 16"><rect width="16" height="16" rx="3" fill="#f2f2f2" /><path d="M4 9Q2.500 8 3.500 5.500T9 3q4.500 0 4.500 3.500T9 10.500Q6 10.500 6.500 8T10 6.500M9.500 10.500L8 14" fill="none" stroke="#333" strokeWidth="1.500" /></svg></TaskButton>
    <TaskButton $open aria-label="메모장"><svg width="13" height="16" viewBox="0 0 13 16"><rect y="1" width="13" height="15" rx="1" fill="#47bfe0" /><path d="M0 2q0-1 1-1h11q1 0 1 1v2H0z" fill="#1d86a8" /><path d="M2 0v3M5 0v3M8 0v3M11 0v3" stroke="#d8f3fb" /><path d="M2.500 7h8M2.500 9.500h8M2.500 12h8" stroke="#0f5f80" /></svg></TaskButton>
    <Clock>오후 9:50<br />2026-03-27</Clock>
  </Taskbar>
);

export default function App() {
  return (
    <Screen>
      <Global />
      <BrowserTop />
      <Viewport>
        <Page>
          <SiteHeader />
          <Columns><Gallery /><SideColumn /></Columns>
        </Page>
        <ScrollTrack aria-hidden="true">
          <svg width="6" height="5" viewBox="0 0 6 5"><path d="M0 5h6L3 0z" fill="#777" /></svg>
          <ScrollThumb />
          <Down w={6} c="#777" />
        </ScrollTrack>
      </Viewport>
      <TaskbarRow />
    </Screen>
  );
}
